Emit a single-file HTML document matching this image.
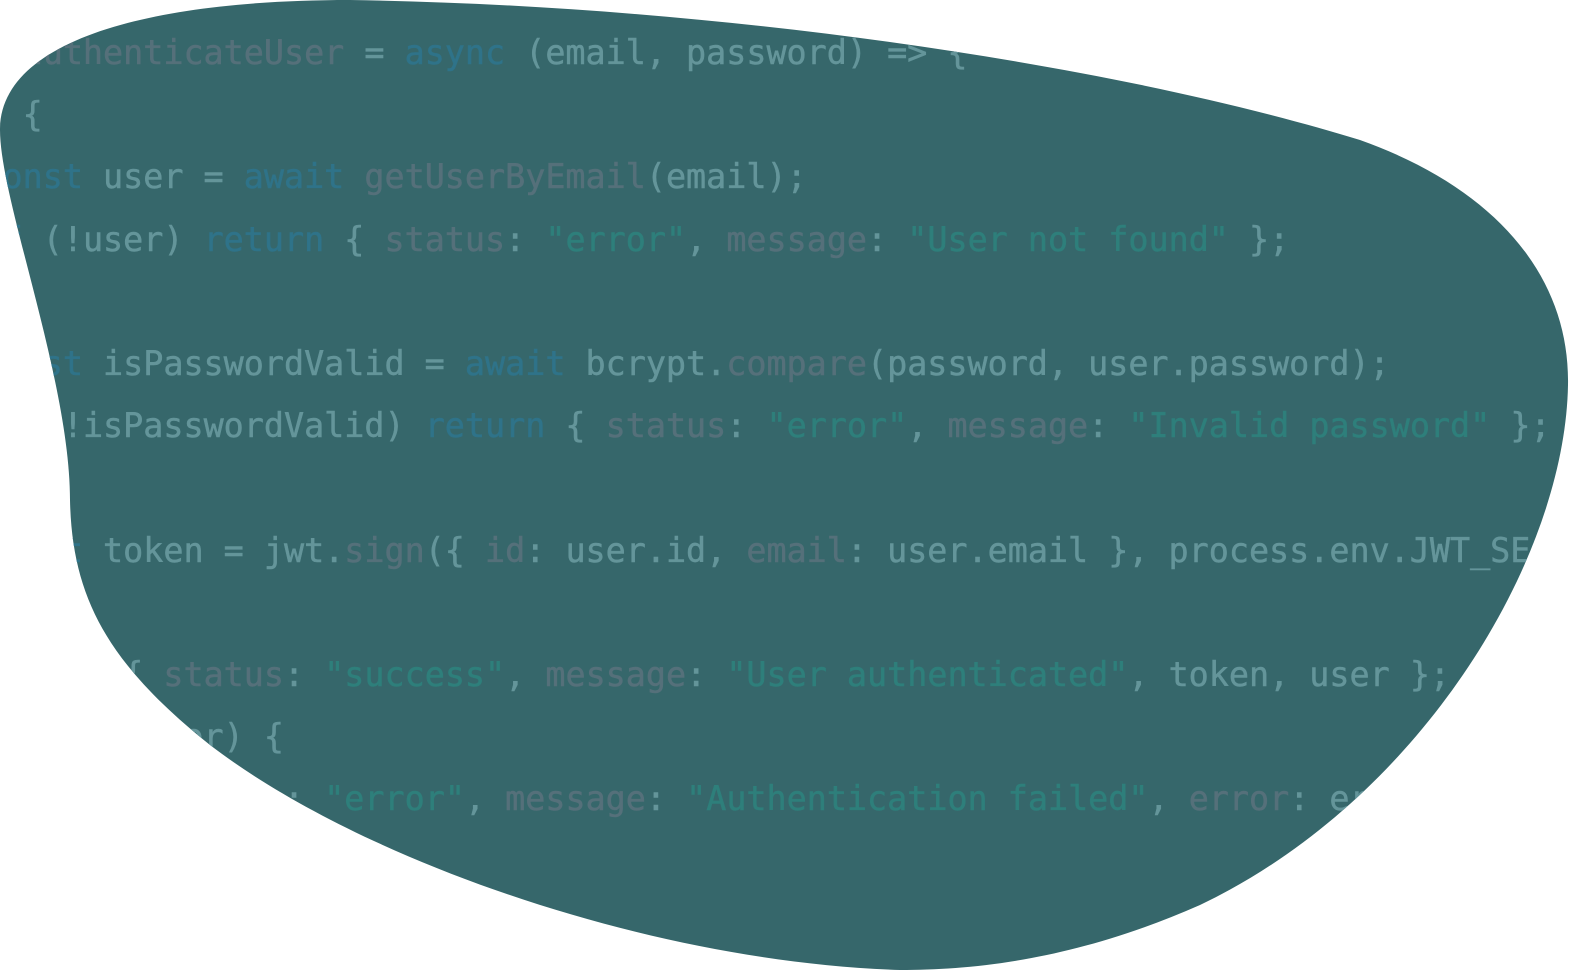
<!DOCTYPE html>
<html><head><meta charset="utf-8"><style>
html,body{margin:0;padding:0;background:#fff;width:1585px;height:980px;overflow:hidden}
#blob{position:absolute;left:0;top:0;width:1585px;height:980px;overflow:hidden;background:#36676b;
clip-path:path("M 0 130 C 0 40, 150 0, 350 0 C 700 5, 1100 60, 1360 140 C 1500 190, 1570 280, 1568 385 C 1565 560, 1420 800, 1200 905 C 1080 958, 980 970, 900 970 C 650 962, 360 860, 210 745 C 110 665, 72 600, 70 500 C 70 380, 0 200, 0 130 Z");}
pre{position:absolute;left:-98px;top:22px;margin:0;font-family:"DejaVu Sans Mono","Liberation Mono",monospace;font-size:33.4px;line-height:62.2px;color:#64959a;white-space:pre;-webkit-text-stroke:0.5px currentColor}
.k{color:#2f7389}.f{color:#55707a}.s{color:#2e7f7b}
</style></head><body>
<div id="blob"><pre><span class="k">const</span> <span class="f">authenticateUser</span> = <span class="k">async</span> (email, password) =&gt; {
  <span class="k">try</span> {
    <span class="k">const</span> user = <span class="k">await</span> <span class="f">getUserByEmail</span>(email);
    <span class="k">if</span> (!user) <span class="k">return</span> { <span class="f">status</span>: <span class="s">"error"</span>, <span class="f">message</span>: <span class="s">"User not found"</span> };

    <span class="k">const</span> isPasswordValid = <span class="k">await</span> bcrypt.<span class="f">compare</span>(password, user.password);
    <span class="k">if</span> (!isPasswordValid) <span class="k">return</span> { <span class="f">status</span>: <span class="s">"error"</span>, <span class="f">message</span>: <span class="s">"Invalid password"</span> };

    <span class="k">const</span> token = jwt.<span class="f">sign</span>({ <span class="f">id</span>: user.id, <span class="f">email</span>: user.email }, process.env.JWT_SECRET);

    <span class="k">return</span> { <span class="f">status</span>: <span class="s">"success"</span>, <span class="f">message</span>: <span class="s">"User authenticated"</span>, token, user };
  } <span class="k">catch</span> (error) {
    <span class="k">return</span> { <span class="f">status</span>: <span class="s">"error"</span>, <span class="f">message</span>: <span class="s">"Authentication failed"</span>, <span class="f">error</span>: error.message };
  }
};</pre></div>
</body></html>
